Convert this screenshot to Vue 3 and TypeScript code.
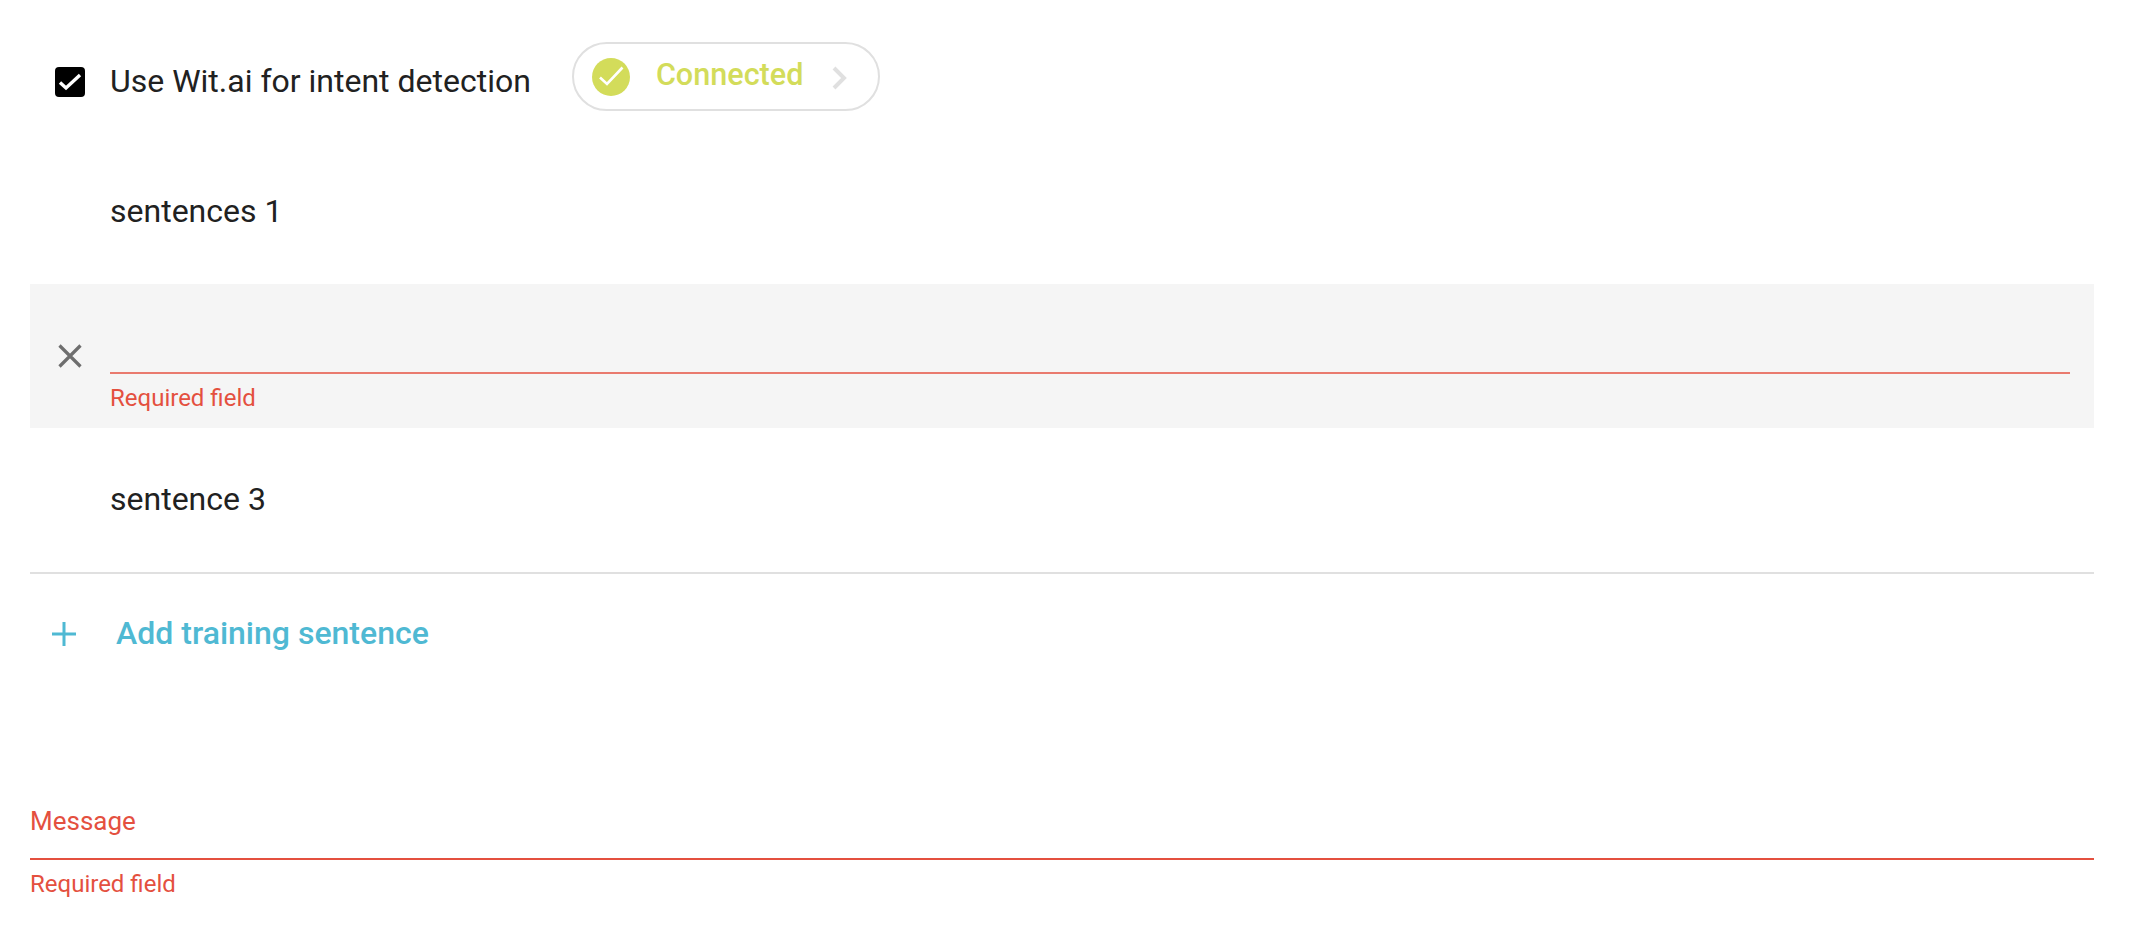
<script setup lang="ts">
const sentences = ['sentences 1', '', 'sentence 3'];
</script>

<template>
  <div class="page">
    <div class="wit-row">
      <span class="checkbox">
        <svg width="30" height="30" viewBox="0 0 30 30">
          <path d="M5 15.5 L11 21 L25 8" fill="none" stroke="#fff" stroke-width="3.4" />
        </svg>
      </span>
      <span class="wit-label">Use Wit.ai for intent detection</span>
      <div class="pill">
        <span class="pill-dot">
          <svg width="38" height="38" viewBox="0 0 38 38">
            <path d="M8 19.5 L15 26 L30.5 9.5" fill="none" stroke="#fff" stroke-width="2.6" />
          </svg>
        </span>
        <span class="pill-text">Connected</span>
        <svg class="pill-arrow" width="15" height="24" viewBox="0 0 15 24">
          <path d="M2 2 L12 12 L2 22" fill="none" stroke="#e0e0e0" stroke-width="4" />
        </svg>
      </div>
    </div>

    <div class="sentences">
      <template v-for="(s, i) in sentences" :key="i">
        <div v-if="s" class="sentence">{{ s }}</div>
        <div v-else class="sentence-edit">
          <svg class="remove" width="24" height="24" viewBox="0 0 24 24">
            <path d="M1.5 1.5 L22.5 22.5 M22.5 1.5 L1.5 22.5" fill="none" stroke="#6e6e6e" stroke-width="3.2" />
          </svg>
          <div class="edit-field">
            <div class="edit-line"></div>
            <div class="error">Required field</div>
          </div>
        </div>
      </template>
    </div>

    <div class="add-row">
      <svg width="24" height="24" viewBox="0 0 24 24">
        <path d="M12 0 V24 M0 12 H24" fill="none" stroke="#4fb9d3" stroke-width="3" />
      </svg>
      <span class="add-text">Add training sentence</span>
    </div>

    <div class="message">
      <div class="message-label">Message</div>
      <div class="message-line"></div>
      <div class="error">Required field</div>
    </div>
  </div>
</template>

<style>
body {
  background: #fff;
}
</style>

<style scoped>
.page {
  width: 2132px;
  height: 936px;
  padding: 0 38px 0 30px;
  box-sizing: border-box;
  overflow: hidden;
  font-family: Roboto, "Liberation Sans", sans-serif;
  color: #212121;
}
.wit-row {
  display: flex;
  align-items: flex-start;
  height: 140px;
  padding-top: 42px;
  box-sizing: border-box;
}
.checkbox {
  display: flex;
  align-items: center;
  justify-content: center;
  width: 30px;
  height: 30px;
  margin: 25px 25px 0 25px;
  background: #000;
  border-radius: 4px;
}
.wit-label {
  font-size: 32px;
  line-height: 44px;
  margin-top: 17px;
}
.pill {
  display: flex;
  align-items: center;
  width: 308px;
  height: 69px;
  margin-left: 41px;
  padding-left: 18px;
  box-sizing: border-box;
  border: 2px solid #e0e0e0;
  border-radius: 35px;
}
.pill-dot {
  display: flex;
  align-items: center;
  justify-content: center;
  width: 38px;
  height: 38px;
  border-radius: 50%;
  background: #d3dc5a;
}
.pill-text {
  margin-left: 26px;
  font-size: 30.6px;
  font-weight: 500;
  line-height: 40px;
  margin-top: -3px;
  color: #d3dc5a;
}
.pill-arrow {
  margin-left: 29px;
  margin-top: 3px;
}
.sentence {
  height: 144px;
  padding: 40px 0 0 80px;
  box-sizing: border-box;
  font-size: 32px;
  line-height: 62px;
}
.sentence-edit {
  display: flex;
  height: 144px;
  background: #f5f5f5;
}
.remove {
  margin: 60px 0 0 28px;
}
.edit-field {
  flex: 1;
  margin: 0 24px 0 28px;
  padding-top: 88px;
}
.edit-line {
  height: 2px;
  background: #e97a6e;
}
.error {
  margin-top: 9px;
  font-size: 24px;
  line-height: 30px;
  color: #e4503f;
}
.add-row {
  display: flex;
  align-items: center;
  height: 120px;
  padding: 2px 0 0 22px;
  border-top: 2px solid #e0e0e0;
  box-sizing: border-box;
}
.add-text {
  margin: -2px 0 0 40px;
  font-size: 32px;
  font-weight: 500;
  color: #4fb9d3;
}
.message {
  margin-top: 112px;
}
.message-label {
  font-size: 26px;
  line-height: 34px;
  color: #e4503f;
}
.message-line {
  height: 2px;
  margin-top: 20px;
  background: #e4503f;
}
</style>
